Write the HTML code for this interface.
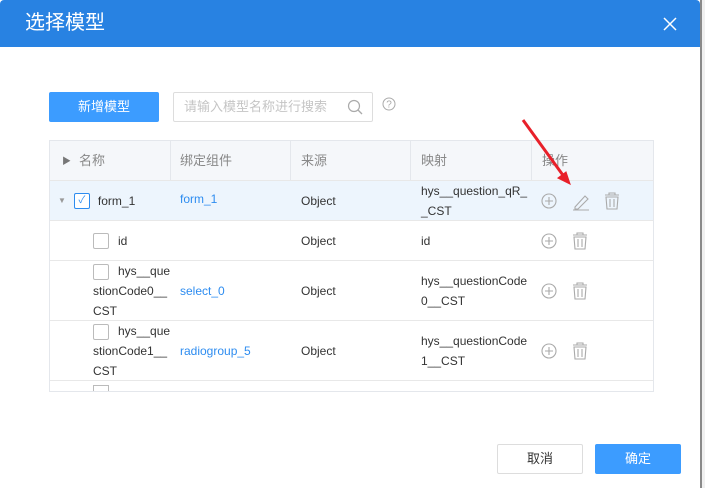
<!DOCTYPE html><html><head><style>
body{margin:0;width:705px;height:488px;overflow:hidden;background:#f0f0f0;font-family:"Liberation Sans","Noto Sans CJK SC",sans-serif;position:relative}
.dlg{position:absolute;left:0;top:0;width:700px;height:488px;background:#fff}
.strip{position:absolute;left:700px;top:0;width:2px;height:488px;background:#8a8a8a}
.hd{height:47px;background:#2882e2;color:#fff;font-size:20px;line-height:47px;padding-left:25px;border-radius:4px 4px 0 0}
.btn{position:absolute;font-size:13px;text-align:center;border-radius:2px}
.t{position:absolute;left:49px;top:140px;width:603px;height:250px;border:1px solid #e4e7ec;overflow:hidden;font-size:12px;color:#333}
.r{position:absolute;left:0;width:603px;border-bottom:1px solid #e8e8e8}
.c{position:absolute;top:0;height:100%;display:flex;align-items:center;line-height:20px}
.w{word-break:break-all;width:110px}
.cb{display:inline-block;width:14px;height:14px;border:1px solid #bbb;border-radius:2px;background:#fff;vertical-align:middle}
.lk{color:#2d8cf0}
svg{position:absolute}
</style></head><body>
<div class="strip"></div>
<div class="dlg">
<div class="hd">选择模型</div>
<svg style="left:663px;top:17px" width="14" height="14"><path d="M1 1l12 12M13 1L1 13" stroke="#fff" stroke-width="1.5"/></svg>
<div class="btn" style="left:49px;top:92px;width:110px;height:30px;line-height:30px;background:#3c9cff;color:#fff">新增模型</div>
<div style="position:absolute;left:173px;top:92px;height:28px;border:1px solid #ddd;border-radius:2px;font-size:13px;color:#c5c5c5;line-height:28px;padding-left:10px;width:188px">请输入模型名称进行搜索</div>
<svg style="left:347px;top:99px" width="16" height="16"><circle cx="7" cy="7" r="5.5" fill="none" stroke="#aaa" stroke-width="1.2"/><path d="M11 11l4 4" stroke="#aaa" stroke-width="1.3"/></svg>
<svg style="left:382px;top:97px" width="14" height="14"><circle cx="7" cy="7" r="6" fill="none" stroke="#aaa"/><text x="7" y="10.5" font-size="10" text-anchor="middle" fill="#aaa" font-family="Liberation Sans">?</text></svg>
<div class="t">
<div class="r" style="top:0;height:39px;background:#f5f7fa;color:#888;font-size:13px">
<div class="c" style="left:12px"><span style="font-size:9px;color:#777;margin-right:8px">▶</span>名称</div>
<div class="c" style="left:130px">绑定组件</div><div class="c" style="left:251px">来源</div><div class="c" style="left:371px">映射</div><div class="c" style="left:492px">操作</div>
<div style="position:absolute;left:120px;top:0;height:39px;border-left:1px solid #e4e7ec"></div>
<div style="position:absolute;left:240px;top:0;height:39px;border-left:1px solid #e4e7ec"></div>
<div style="position:absolute;left:360px;top:0;height:39px;border-left:1px solid #e4e7ec"></div>
<div style="position:absolute;left:481px;top:0;height:39px;border-left:1px solid #e4e7ec"></div>
</div>
<div class="r" style="top:40px;height:39px;background:#edf5fd">
<div class="c" style="left:8px"><span style="font-size:8px;color:#999;margin-right:8px">▼</span><span class="cb" style="border-color:#2d8cf0;color:#2d8cf0;font-size:10px;line-height:14px;text-align:center">✓</span><span style="margin-left:8px">form_1</span></div>
<div class="c lk" style="left:130px;top:-2px">form_1</div><div class="c" style="left:251px">Object</div>
<div class="c" style="left:371px"><div class="w">hys__question_qR__CST</div></div></div>
<div class="r" style="top:80px;height:39px">
<div class="c" style="left:43px"><span class="cb"></span><span style="margin-left:9px">id</span></div>
<div class="c" style="left:251px">Object</div><div class="c" style="left:371px">id</div></div>
<div class="r" style="top:120px;height:59px">
<div class="c" style="left:43px;width:80px;display:block;padding-top:0;height:auto"><span class="cb"></span><span style="margin-left:9px">hys__que</span><br>stionCode0__<br>CST</div>
<div class="c lk" style="left:130px">select_0</div><div class="c" style="left:251px">Object</div>
<div class="c" style="left:371px"><div class="w">hys__questionCode0__CST</div></div></div>
<div class="r" style="top:180px;height:59px">
<div class="c" style="left:43px;width:80px;display:block;padding-top:0;height:auto"><span class="cb"></span><span style="margin-left:9px">hys__que</span><br>stionCode1__<br>CST</div>
<div class="c lk" style="left:130px">radiogroup_5</div><div class="c" style="left:251px">Object</div>
<div class="c" style="left:371px"><div class="w">hys__questionCode1__CST</div></div></div>
<div style="position:absolute;left:43px;top:244px;width:14px;height:14px;border:1px solid #bbb"></div>
</div>
<svg width="705" height="488" style="left:0;top:0;pointer-events:none" fill="none" stroke="#aaa" stroke-width="1.1">
<circle cx="549" cy="201" r="7"/><path d="M549 197v8M545 201h8"/>
<circle cx="549" cy="241" r="7"/><path d="M549 237v8M545 241h8"/>
<circle cx="549" cy="291" r="7"/><path d="M549 287v8M545 291h8"/>
<circle cx="549" cy="351" r="7"/><path d="M549 347v8M545 351h8"/>
<path d="M575 207l10-11l3 3l-10 10h-3zM573 210h16"/>
<path d="M605 195h14M609 195v-2h6v2M606 197h12l-1 12h-10zM610 199v8M614 199v8"/>
<path d="M573 235h14M577 235v-2h6v2M574 237h12l-1 12h-10zM578 239v8M582 239v8"/>
<path d="M573 285h14M577 285v-2h6v2M574 287h12l-1 12h-10zM578 289v8M582 289v8"/>
<path d="M573 345h14M577 345v-2h6v2M574 347h12l-1 12h-10zM578 349v8M582 349v8"/>
<path d="M523 120l42 58" stroke="#e8202a" stroke-width="3"/><path d="M570 184l-12-6l8-6z" fill="#e8202a" stroke="#e8202a"/>
</svg>
<div class="btn" style="left:497px;top:444px;width:84px;height:28px;line-height:28px;border:1px solid #ddd;color:#333">取消</div>
<div class="btn" style="left:595px;top:444px;width:86px;height:30px;line-height:30px;background:#3c9cff;color:#fff">确定</div>
</div>
</body></html>
